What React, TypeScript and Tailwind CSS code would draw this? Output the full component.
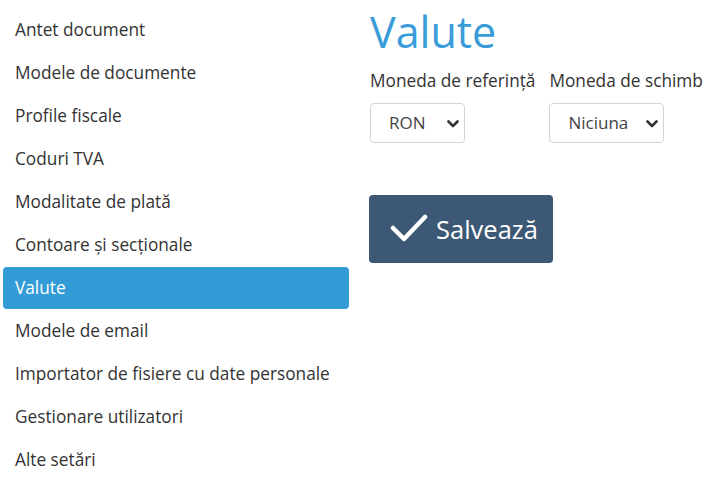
import { useState } from 'react';

const MENU_ITEMS = [
  'Antet document',
  'Modele de documente',
  'Profile fiscale',
  'Coduri TVA',
  'Modalitate de plată',
  'Contoare și secționale',
  'Valute',
  'Modele de email',
  'Importator de fisiere cu date personale',
  'Gestionare utilizatori',
  'Alte setări',
];

// select simplu cu sageata proprie
const CurrencySelect: React.FC<{ value: string; options: string[]; width: string }> = ({ value, options, width }) => {
  const [current, setCurrent] = useState(value);
  return (
    <div className={`relative ${width} h-[40px]`}>
      <select
        value={current}
        onChange={(e) => setCurrent(e.target.value)}
        className="appearance-none w-full h-full pl-[18px] pr-6 text-[17px] text-[#444] bg-white border border-[#d4d4d4] rounded-[4px] outline-none"
      >
        {options.map((o) => (
          <option key={o} value={o}>
            {o}
          </option>
        ))}
      </select>
      <svg
        className="absolute right-[6px] top-[17px] pointer-events-none"
        width="12"
        height="8"
        viewBox="0 0 12 8"
        fill="none"
      >
        <path d="M1.5 1.5 L6 6 L10.5 1.5" stroke="#333" strokeWidth="2.6" strokeLinecap="round" strokeLinejoin="round" />
      </svg>
    </div>
  );
};

export default function App() {
  const [active, setActive] = useState('Valute');

  return (
    <div className="w-[722px] h-[492px] bg-white flex font-['Open_Sans','Liberation_Sans',sans-serif] text-[#333]">
      {/* meniu lateral */}
      <nav className="w-[349px] pl-[3px] pt-[9px] flex flex-col">
        {MENU_ITEMS.map((item) => (
          <button
            key={item}
            type="button"
            onClick={() => setActive(item)}
            className={
              item === active
                ? 'h-[42px] mb-[1px] pl-[12px] text-left text-[17.25px] leading-[24px] rounded-[4px] bg-[#339bd6] text-white'
                : 'h-[42px] mb-[1px] pl-[12px] text-left text-[17.25px] leading-[24px] rounded-[4px] text-[#333]'
            }
          >
            {item}
          </button>
        ))}
      </nav>

      {/* continut */}
      <main className="ml-[21px] pt-[9px] flex flex-col">
        <h1 className="text-[43px] leading-[46px] text-[#3a9bd9]">Valute</h1>

        <div className="mt-[14px] flex gap-[14px]">
          <div className="flex flex-col">
            <label className="text-[17.25px] leading-[24px]">Moneda de referință</label>
            <div className="mt-[10px]">
              <CurrencySelect value="RON" options={['RON', 'EUR', 'USD']} width="w-[95px]" />
            </div>
          </div>
          <div className="flex flex-col">
            <label className="text-[17.25px] leading-[24px]">Moneda de schimb</label>
            <div className="mt-[10px]">
              <CurrencySelect value="Niciuna" options={['Niciuna', 'EUR', 'USD']} width="w-[115px]" />
            </div>
          </div>
        </div>

        <button
          type="button"
          className="mt-[52px] -ml-[1px] w-[184px] h-[68px] rounded-[4px] bg-[#3d5875] text-white flex items-center pl-[21px] gap-[8px]"
        >
          <svg width="38" height="30" viewBox="0 0 38 30" fill="none">
            <path d="M3 14 L14 25 L35 3" stroke="white" strokeWidth="4.5" strokeLinecap="round" strokeLinejoin="round" />
          </svg>
          <span className="text-[25.5px] leading-[32px]">Salvează</span>
        </button>
      </main>
    </div>
  );
}
